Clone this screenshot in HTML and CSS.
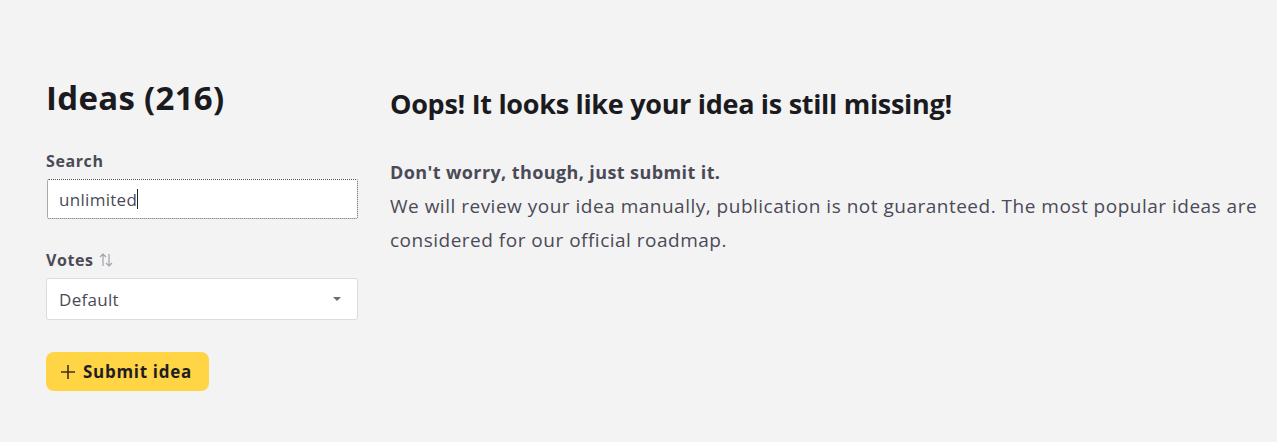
FILE: index.html
```html
<!DOCTYPE html>
<html lang="en">
<head>
  <meta charset="UTF-8">
  <title>Ideas</title>
  <link rel="stylesheet" href="styles.css">
</head>
<body>
  <div class="page">
    <aside class="sidebar">
      <h1 class="title">Ideas (216)</h1>

      <label class="field-label" for="search">Search</label>
      <div class="search-box">unlimited<span class="caret"></span></div>

      <div class="field-label votes-label">
        Votes
        <svg class="sort-icon" width="18" height="18" viewBox="0 0 18 18" fill="none" stroke="#a2a2aa" stroke-width="1.2">
          <path d="M6 15V3M3 6l3-3 3 3"/>
          <path d="M12 3v12M9 12l3 3 3-3"/>
        </svg>
      </div>
      <div class="select">
        <span>Default</span>
        <span class="arrow"></span>
      </div>

      <button class="submit-btn">
        <svg width="16" height="16" viewBox="0 0 16 16" stroke="#3a3320" stroke-width="1.6">
          <path d="M8 1v14M1 8h14"/>
        </svg>
        Submit idea
      </button>
    </aside>

    <main class="content">
      <h2 class="empty-title">Oops! It looks like your idea is still missing!</h2>
      <p class="empty-lead">Don't worry, though, just submit it.</p>
      <p class="empty-text">We will review your idea manually, publication is not guaranteed. The most popular ideas are considered for our official roadmap.</p>
    </main>
  </div>
</body>
</html>
```

FILE: styles.css
```css
html, body {
  margin: 0;
  background: #f3f3f3;
}

body {
  font-family: "Open Sans", Arial, sans-serif;
  color: #4b4a57;
}

.page {
  display: flex;
  gap: 32px;
  padding: 76px 8px 0 46px;
}

.sidebar {
  width: 312px;
  flex-shrink: 0;
}

.title {
  margin: 0 0 31px;
  font-size: 33px;
  line-height: 44px;
  color: #1b1b1f;
  font-weight: 700;
  letter-spacing: 0.3px;
}

.field-label {
  display: block;
  font-size: 16px;
  font-weight: 700;
  line-height: 20px;
  margin-bottom: 8px;
  letter-spacing: 0.6px;
}

.search-box {
  height: 40px;
  box-sizing: border-box;
  border: 1px dotted #555;
  border-radius: 2px;
  background: #fff;
  margin-left: 1px;
  padding: 0 11px;
  display: flex;
  align-items: center;
  font-size: 17px;
  letter-spacing: 0.3px;
  color: #4b4a57;
}

.caret {
  display: inline-block;
  width: 1px;
  height: 20px;
  background: #222;
}

.votes-label {
  margin-top: 31px;
  display: flex;
  align-items: center;
  gap: 3px;
}

.select {
  height: 42px;
  box-sizing: border-box;
  border: 1px solid #dcdcdf;
  border-radius: 3px;
  background: #fff;
  padding: 0 16px 0 12px;
  display: flex;
  align-items: center;
  justify-content: space-between;
  font-size: 17px;
  letter-spacing: 0.3px;
}

.arrow {
  width: 0;
  height: 0;
  border-left: 4px solid transparent;
  border-right: 4px solid transparent;
  border-top: 4px solid #6b6b73;
}

.submit-btn {
  margin-top: 32px;
  height: 39px;
  padding: 0 17px 0 14px;
  border: none;
  border-radius: 8px;
  background: #ffd445;
  display: inline-flex;
  align-items: center;
  gap: 7px;
  font-family: inherit;
  font-size: 17px;
  font-weight: 700;
  letter-spacing: 0.7px;
  color: #1e1d24;
}

.content {
  flex: 1;
  padding-top: 9px;
}

.empty-title {
  margin: 0 0 32px;
  font-size: 27px;
  line-height: 38px;
  font-weight: 700;
  color: #1b1b1f;
  letter-spacing: -0.3px;
}

.empty-lead {
  margin: 0;
  font-size: 18px;
  font-weight: 700;
  line-height: 34px;
  letter-spacing: 0.4px;
}

.empty-text {
  margin: 0;
  font-size: 19px;
  line-height: 34px;
  letter-spacing: 0.5px;
}
```
